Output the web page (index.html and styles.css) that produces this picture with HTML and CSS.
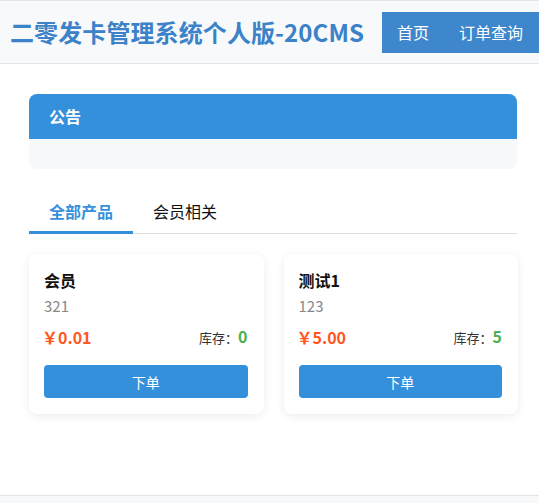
FILE: index.html
```html
<!DOCTYPE html>
<html lang="zh-CN">
<head>
<meta charset="utf-8">
<title>二零发卡管理系统个人版-20CMS</title>
<link rel="stylesheet" href="styles.css">
</head>
<body>
<header class="header">
  <div class="logo">二零发卡管理系统个人版-20CMS</div>
  <nav class="nav">
    <a class="nav-item" href="#">首页</a>
    <a class="nav-item" href="#">订单查询</a>
  </nav>
</header>
<main class="main">
  <section class="notice">
    <div class="notice-head">公告</div>
    <div class="notice-body"></div>
  </section>
  <div class="tabs">
    <div class="tab active">全部产品</div>
    <div class="tab">会员相关</div>
  </div>
  <div class="goods">
    <div class="card">
      <div class="card-title">会员</div>
      <div class="card-desc">321</div>
      <div class="card-row">
        <span class="price">￥0.01</span>
        <span class="stock">库存：<b class="stock-num">0</b></span>
      </div>
      <button class="buy">下单</button>
    </div>
    <div class="card">
      <div class="card-title">测试1</div>
      <div class="card-desc">123</div>
      <div class="card-row">
        <span class="price">￥5.00</span>
        <span class="stock">库存：<b class="stock-num">5</b></span>
      </div>
      <button class="buy">下单</button>
    </div>
  </div>
</main>
<footer class="footer"></footer>
</body>
</html>
```
FILE: styles.css
```css
* { box-sizing: border-box; }
body {
  margin: 0;
  background: #fff;
  font-family: "Noto Sans CJK SC", "Noto Sans", sans-serif;
  color: #222;
}
.header {
  height: 64px;
  border-top: 1px solid #e3e5e9;
  border-bottom: 1px solid #e3e5e9;
  background: #f8f9fb;
  display: flex;
  align-items: center;
  justify-content: space-between;
  padding-left: 10px;
  white-space: nowrap;
}
.logo {
  font-size: 24px;
  font-weight: 700;
  color: #3b82c8;
  line-height: 1;
  letter-spacing: 0.1px;
  flex-shrink: 0;
}
.nav {
  display: flex;
  align-items: center;
  height: 41px;
  background: #3e87cc;
  flex-shrink: 0;
  padding-right: 1px;
}
.nav-item {
  color: #fff;
  text-decoration: none;
  font-size: 16px;
  padding: 0 15px;
  line-height: 41px;
}
.main {
  padding: 30px 21px 0 29px;
}
.notice {
  border-radius: 8px;
  overflow: hidden;
  background: #f7f8fa;
  margin-right: 1px;
}
.notice-head {
  background: #3590dc;
  height: 45px;
  line-height: 45px;
  padding: 0 20px;
  color: #fff;
  font-size: 16px;
  font-weight: 700;
}
.notice-body { height: 30px; }
.tabs {
  margin-top: 22px;
  display: flex;
  border-bottom: 1px solid #e0e0e0;
  margin-right: 1px;
}
.tab {
  padding: 0 20px;
  line-height: 40px;
  font-size: 16px;
  color: #111;
  border-bottom: 3px solid transparent;
  margin-bottom: -1px;
}
.tab.active {
  color: #3590dc;
  font-weight: 700;
  border-bottom-color: #3590dc;
}
.goods {
  margin-top: 20px;
  display: grid;
  grid-template-columns: 1fr 1fr;
  gap: 20px;
}
.card {
  background: #fff;
  border-radius: 8px;
  box-shadow: 0 2px 10px rgba(0, 0, 0, 0.08);
  padding: 14px 16px 16px 15px;
}
.card-title {
  font-size: 16px;
  font-weight: 700;
  line-height: 24px;
  color: #111;
}
.card-desc {
  margin-top: 4px;
  font-size: 15px;
  line-height: 20px;
  color: #888;
}
.card-row {
  margin-top: 8px;
  display: flex;
  justify-content: space-between;
  align-items: center;
  line-height: 24px;
}
.price {
  color: #ff5722;
  font-size: 16px;
  font-weight: 700;
  margin-left: -2px;
}
.stock {
  font-size: 13px;
  color: #333;
}
.stock-num {
  color: #4caf50;
  font-size: 16px;
  font-weight: 700;
}
.buy {
  display: block;
  width: 100%;
  margin-top: 15px;
  height: 33px;
  border: 0;
  border-radius: 4px;
  background: #3590dc;
  color: #fff;
  font-family: inherit;
  font-size: 14px;
}
.footer {
  margin-top: 81px;
  height: 40px;
  border-top: 1px solid #e5e5e5;
  background: #f7f8fa;
}
```
